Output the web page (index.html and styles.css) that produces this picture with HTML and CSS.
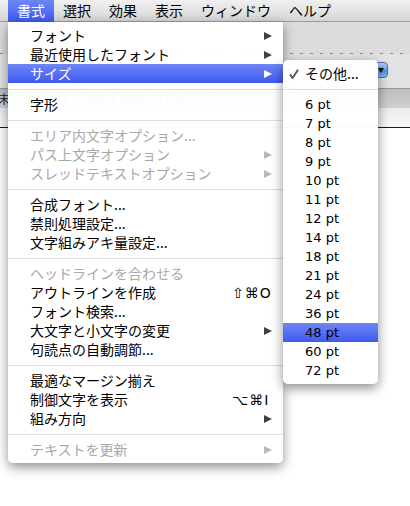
FILE: index.html
```html
<!DOCTYPE html>
<html lang="ja">
<head>
<meta charset="utf-8">
<title>書式メニュー</title>
<link rel="stylesheet" href="styles.css">
</head>
<body>
<div class="screen">
  <div class="menubar">
    <span class="mtitle active">書式</span>
    <span class="mtitle">選択</span>
    <span class="mtitle">効果</span>
    <span class="mtitle">表示</span>
    <span class="mtitle">ウィンドウ</span>
    <span class="mtitle">ヘルプ</span>
  </div>
  <div class="toolbar"></div>
  <div class="controlbar"><span class="popup"><span class="popup-arrow"></span></span></div>
  <div class="tabbar"><span class="tab">未タイトル-1 @ 100% (RGB/プレビュー)</span></div>
  <div class="rulerstrip"></div>
  <div class="document"></div>

  <div class="menu main-menu">
    <div class="item"><span class="label">フォント</span><span class="side"><span class="arrow"></span></span></div>
    <div class="item"><span class="label">最近使用したフォント</span><span class="side"><span class="arrow"></span></span></div>
    <div class="item selected"><span class="label">サイズ</span><span class="side"><span class="arrow"></span></span></div>
    <div class="sep"></div>
    <div class="item"><span class="label">字形</span><span class="side"></span></div>
    <div class="sep"></div>
    <div class="item disabled"><span class="label">エリア内文字オプション...</span><span class="side"></span></div>
    <div class="item disabled"><span class="label">パス上文字オプション</span><span class="side"><span class="arrow"></span></span></div>
    <div class="item disabled"><span class="label">スレッドテキストオプション</span><span class="side"><span class="arrow"></span></span></div>
    <div class="sep"></div>
    <div class="item"><span class="label">合成フォント...</span><span class="side"></span></div>
    <div class="item"><span class="label">禁則処理設定...</span><span class="side"></span></div>
    <div class="item"><span class="label">文字組みアキ量設定...</span><span class="side"></span></div>
    <div class="sep"></div>
    <div class="item disabled"><span class="label">ヘッドラインを合わせる</span><span class="side"></span></div>
    <div class="item"><span class="label">アウトラインを作成</span><span class="side shortcut">⇧⌘O</span></div>
    <div class="item"><span class="label">フォント検索...</span><span class="side"></span></div>
    <div class="item"><span class="label">大文字と小文字の変更</span><span class="side"><span class="arrow"></span></span></div>
    <div class="item"><span class="label">句読点の自動調節...</span><span class="side"></span></div>
    <div class="sep"></div>
    <div class="item"><span class="label">最適なマージン揃え</span><span class="side"></span></div>
    <div class="item"><span class="label">制御文字を表示</span><span class="side shortcut">⌥⌘I</span></div>
    <div class="item"><span class="label">組み方向</span><span class="side"><span class="arrow"></span></span></div>
    <div class="sep"></div>
    <div class="item disabled"><span class="label">テキストを更新</span><span class="side"><span class="arrow"></span></span></div>
  </div>

  <div class="menu sub-menu">
    <div class="subitem"><span class="check"><svg width="10" height="10" viewBox="0 0 10 10"><path d="M1 5.4 L3.6 9 L9 0.8" fill="none" stroke="#5a5a5a" stroke-width="2" stroke-linejoin="round"/></svg></span><span class="label">その他...</span></div>
    <div class="sep"></div>
    <div class="subitem pt"><span class="check"></span><span class="label">6 pt</span></div>
    <div class="subitem pt"><span class="check"></span><span class="label">7 pt</span></div>
    <div class="subitem pt"><span class="check"></span><span class="label">8 pt</span></div>
    <div class="subitem pt"><span class="check"></span><span class="label">9 pt</span></div>
    <div class="subitem pt"><span class="check"></span><span class="label">10 pt</span></div>
    <div class="subitem pt"><span class="check"></span><span class="label">11 pt</span></div>
    <div class="subitem pt"><span class="check"></span><span class="label">12 pt</span></div>
    <div class="subitem pt"><span class="check"></span><span class="label">14 pt</span></div>
    <div class="subitem pt"><span class="check"></span><span class="label">18 pt</span></div>
    <div class="subitem pt"><span class="check"></span><span class="label">21 pt</span></div>
    <div class="subitem pt"><span class="check"></span><span class="label">24 pt</span></div>
    <div class="subitem pt"><span class="check"></span><span class="label">36 pt</span></div>
    <div class="subitem pt selected"><span class="check"></span><span class="label">48 pt</span></div>
    <div class="subitem pt"><span class="check"></span><span class="label">60 pt</span></div>
    <div class="subitem pt"><span class="check"></span><span class="label">72 pt</span></div>
  </div>
</div>
</body>
</html>
```

FILE: styles.css
```css
* { box-sizing: border-box; }
html, body { margin: 0; padding: 0; }
body {
  width: 410px;
  height: 506px;
  overflow: hidden;
  background: #fff;
  font-family: "Noto Sans CJK JP", sans-serif;
}
.screen {
  position: relative;
  width: 410px;
  height: 506px;
  overflow: hidden;
  display: flex;
  flex-direction: column;
}

/* menubar */
.menubar {
  flex: none;
  height: 22px;
  display: flex;
  padding-left: 8px;
  background: linear-gradient(#f0f0f0, #d5d5d5);
  box-shadow: inset 0 -1px 0 #9c9c9c;
  font-size: 14px;
  line-height: 21px;
  white-space: nowrap;
}
.mtitle {
  padding: 0 9px;
  height: 22px;
  color: #000;
}
.mtitle.active {
  background: linear-gradient(#6f86f6, #3d5af0);
  color: #fff;
}

/* background window */
.toolbar {
  flex: none;
  height: 32px;
  background: repeating-linear-gradient(90deg, #8c8c8c 0 3px, transparent 3px 10px) left bottom / 100% 1px no-repeat, #dcdcdc;
}
.controlbar {
  flex: none;
  height: 35px;
  background: #e2e2e2;
  border-bottom: 1px solid #9a9a9a;
  display: flex;
  justify-content: flex-end;
  align-items: flex-start;
  padding: 8px 22px 0 0;
}
.popup {
  width: 40px;
  height: 16px;
  border-radius: 4px;
  border: 1px solid #4d6e9f;
  background: linear-gradient(#b3d0f5, #6ea2ea 50%, #4f8ae0 51%, #8ab9f2);
  display: flex;
  align-items: center;
  justify-content: flex-end;
  padding-right: 3px;
}
.popup-arrow {
  width: 0;
  height: 0;
  border-top: 5px solid #111;
  border-left: 3.5px solid transparent;
  border-right: 3.5px solid transparent;
}
.tabbar {
  flex: none;
  height: 19px;
  background: linear-gradient(#bdbdbd, #d0d0d0);
  font-size: 12px;
  line-height: 19px;
  white-space: nowrap;
  overflow: hidden;
}
.tab {
  display: inline-block;
  margin-left: -2px;
  color: #222;
}
.rulerstrip {
  flex: none;
  height: 20px;
  background: linear-gradient(#ececec, #f8f8f8);
  border-bottom: 1px solid #1a1a1a;
}
.document {
  flex: 1;
  background: #fff;
}

/* menus */
.menu {
  position: absolute;
  background: rgba(255, 255, 255, 0.975);
  box-shadow: 0 4px 12px rgba(0, 0, 0, 0.45);
  padding: 4px 0;
  font-size: 14px;
}
.main-menu {
  top: 22px;
  left: 8px;
  width: 275px;
  border-radius: 0 0 5px 5px;
}
.sub-menu {
  top: 60px;
  left: 283px;
  width: 95px;
  border-radius: 5px;
}
.item {
  height: 19px;
  line-height: 18px;
  display: grid;
  grid-template-columns: 1fr 40px;
  padding: 0 11px 0 22px;
  color: #000;
  white-space: nowrap;
}
.item.disabled { color: #a8a8a8; }
.selected {
  background: linear-gradient(#6f86f6, #3d5af0);
  color: #fff;
}
.side {
  display: flex;
  align-items: center;
  justify-content: flex-end;
}
.side.shortcut {
  justify-content: flex-start;
  font-family: "DejaVu Sans", sans-serif;
  font-size: 14px;
  letter-spacing: 1px;
}
.arrow {
  width: 0;
  height: 0;
  border-left: 8px solid #404040;
  border-top: 4.5px solid transparent;
  border-bottom: 4.5px solid transparent;
}
.disabled .arrow { border-left-color: #b8b8b8; }
.selected .arrow { border-left-color: #fff; }
.sep {
  height: 12px;
  display: flex;
  align-items: center;
}
.sep::before {
  content: "";
  flex: 1;
  height: 1px;
  background: #dfdfdf;
}

.subitem {
  height: 19px;
  line-height: 18px;
  display: grid;
  grid-template-columns: 22px 1fr;
  color: #000;
  white-space: nowrap;
}
.check {
  display: flex;
  align-items: center;
  padding-left: 6px;
}
.subitem.pt {
  font-family: "DejaVu Sans", sans-serif;
  font-size: 13px;
  line-height: 19px;
}
```
